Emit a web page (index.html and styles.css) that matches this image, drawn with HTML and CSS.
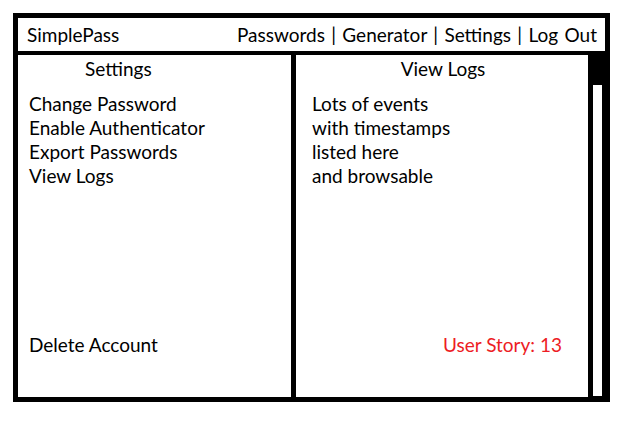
FILE: index.html
```html
<!DOCTYPE html>
<html lang="en">
<head>
  <meta charset="UTF-8">
  <meta name="viewport" content="width=device-width, initial-scale=1.0">
  <title>SimplePass - Settings</title>
  <link rel="stylesheet" href="styles.css">
</head>
<body>
  <div class="frame">
    <div class="header">
      <span class="brand">SimplePass</span>
      <span class="nav">Passwords | Generator | Settings | Log Out</span>
    </div>

    <div class="main">
      <!-- Settings menu -->
      <div class="panel settings">
        <div class="panel-title">Settings</div>
        <div class="menu">
          <div>Change Password</div>
          <div>Enable Authenticator</div>
          <div>Export Passwords</div>
          <div>View Logs</div>
        </div>
        <div class="panel-bottom">Delete Account</div>
      </div>

      <!-- Logs view -->
      <div class="panel logs">
        <div class="panel-title">View Logs</div>
        <div class="menu">
          <div>Lots of events</div>
          <div>with timestamps</div>
          <div>listed here</div>
          <div>and browsable</div>
        </div>
        <div class="panel-bottom story">User Story: 13</div>
      </div>

      <div class="scrollbar">
        <div class="thumb"></div>
      </div>
    </div>
  </div>
</body>
</html>
```

FILE: styles.css
```css
body {
  margin: 0;
  background-color: #fff;
  color: #000;
  font-family: Lato, "Liberation Sans", sans-serif;
  font-size: 19px;
  line-height: 24px;
}

.frame {
  box-sizing: border-box;
  width: 597px;
  height: 389px;
  margin: 13px 0 0 13px;
  border: 5px solid #000;
  display: flex;
  flex-direction: column;
}

.header {
  height: 33px;
  border-bottom: 4px solid #000;
  display: flex;
  justify-content: space-between;
  align-items: center;
  padding: 0 8px 0 9px;
}

.nav {
  word-spacing: 1.5px;
}

.main {
  flex: 1;
  display: flex;
}

.panel {
  box-sizing: border-box;
  display: flex;
  flex-direction: column;
  padding-top: 2px;
  padding-bottom: 40px;
}

.settings {
  width: 278px;
  border-right: 5px solid #000;
  padding-left: 11px;
}

.settings .panel-title {
  padding-left: 56px;
}

.logs {
  flex: 1;
  padding-left: 16px;
  padding-right: 26px;
}

.logs .panel-title {
  text-align: center;
  padding-left: 12px;
}

.menu {
  margin-top: 11px;
}

.panel-bottom {
  margin-top: auto;
}

.story {
  text-align: right;
  color: #ed1c24;
}

/* Scrollbar */
.scrollbar {
  width: 17px;
  background-color: #000;
  padding: 30px 3px 1px 5px;
  box-sizing: border-box;
}

.thumb {
  height: 100%;
  background-color: #fff;
}
```
